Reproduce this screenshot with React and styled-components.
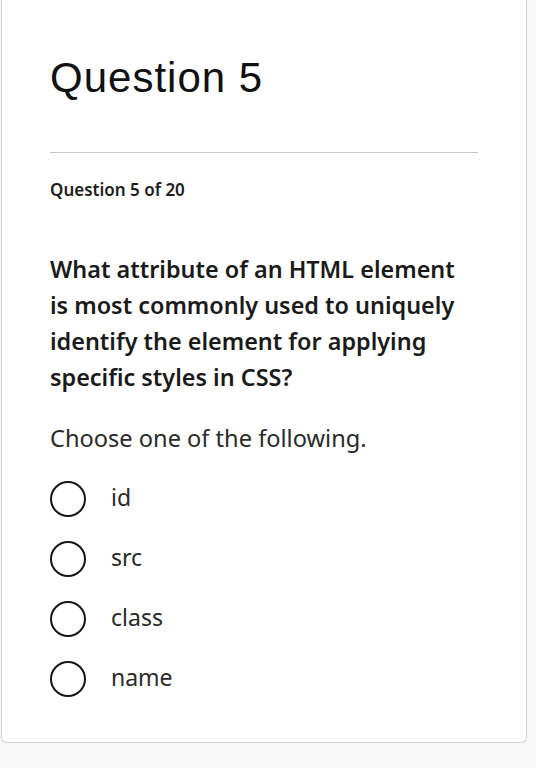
import React from "react";
import styled, { createGlobalStyle } from "styled-components";

const Global = createGlobalStyle`
  html, body { margin: 0; padding: 0; background: #f8f8f8; }
  body { font-family: "Noto Sans", "Open Sans", sans-serif; color: #1e1e1e; }
`;

const Card = styled.section`
  box-sizing: border-box;
  width: 526px;
  margin-left: 1px;
  background: #fff;
  border: 1px solid #d3d3d3;
  border-top: none;
  border-radius: 0 0 6px 6px;
  padding: 54px 48px 33px;
`;

const Heading = styled.h1`
  margin: 0;
  font-family: "Liberation Sans", Arial, sans-serif;
  font-weight: 400;
  font-size: 42px;
  line-height: 48px;
  letter-spacing: 1px;
  color: #111;
`;

const Divider = styled.hr`
  margin: 50px 0 0;
  border: none;
  height: 1px;
  background: #c8c8c8;
`;

const Counter = styled.div`
  margin-top: 25px;
  font-size: 17px;
  font-weight: 600;
  line-height: 24px;
  color: #1e1e1e;
`;

const Prompt = styled.p`
  margin: 49px 0 0;
  max-width: 420px;
  font-size: 23.4px;
  font-weight: 600;
  line-height: 36px;
  color: #1a1a1a;
`;

const Instruction = styled.p`
  margin: 27px 0 0;
  font-size: 23.6px;
  font-weight: 400;
  line-height: 32px;
  color: #2a2a2a;
`;

const Options = styled.div`
  margin-top: 15px;
  display: flex;
  flex-direction: column;
`;

const Option = styled.label`
  display: flex;
  align-items: center;
  gap: 25px;
  height: 60px;
  cursor: pointer;
`;

const Radio = styled.input`
  appearance: none;
  margin: 0;
  box-sizing: border-box;
  width: 36px;
  height: 36px;
  border-radius: 50%;
  border: 2.5px solid #161616;
  background: #fff;
  flex: none;
`;

const Label = styled.span`
  font-size: 23px;
  line-height: 30px;
  padding-bottom: 4px;
  color: #2a2a2a;
`;

const choices = ["id", "src", "class", "name"];

export default function App() {
  return (
    <>
      <Global />
      <Card>
        <Heading>Question 5</Heading>
        <Divider />
        <Counter>Question 5 of 20</Counter>
        <Prompt>
          What attribute of an HTML element is most commonly used to uniquely
          identify the element for applying specific styles in CSS?
        </Prompt>
        <Instruction>Choose one of the following.</Instruction>
        <Options>
          {choices.map((c) => (
            <Option key={c}>
              <Radio type="radio" name="q5" value={c} />
              <Label>{c}</Label>
            </Option>
          ))}
        </Options>
      </Card>
    </>
  );
}
